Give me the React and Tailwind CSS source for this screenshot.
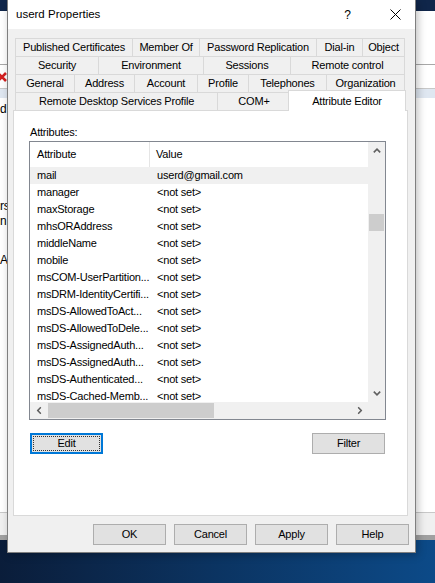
const TAB_ROWS = [
  [['Published Certificates', 117], ['Member Of', 67], ['Password Replication', 117], ['Dial-in', 46], ['Object', 43]],
  [['Security', 83], ['Environment', 105], ['Sessions', 87], ['Remote control', 115]],
  [['General', 59], ['Address', 60], ['Account', 63], ['Profile', 51], ['Telephones', 78], ['Organization', 79]],
]

const ATTRIBUTES = [
  ['mail', 'userd@gmail.com'],
  ['manager', '<not set>'],
  ['maxStorage', '<not set>'],
  ['mhsORAddress', '<not set>'],
  ['middleName', '<not set>'],
  ['mobile', '<not set>'],
  ['msCOM-UserPartition...', '<not set>'],
  ['msDRM-IdentityCertifi...', '<not set>'],
  ['msDS-AllowedToAct...', '<not set>'],
  ['msDS-AllowedToDele...', '<not set>'],
  ['msDS-AssignedAuth...', '<not set>'],
  ['msDS-AssignedAuth...', '<not set>'],
  ['msDS-Authenticated...', '<not set>'],
  ['msDS-Cached-Memb...', '<not set>'],
]

// small scrollbar arrow, rotated per direction
function Arrow({ dir }) {
  const rot = { up: 0, down: 180, left: 270, right: 90 }[dir]
  return (
    <svg width="8" height="5" viewBox="0 0 8 5" style={{ transform: `rotate(${rot}deg)` }}>
      <polyline points="0.8,4.4 4,1.2 7.2,4.4" fill="none" stroke="#606060" strokeWidth="1.6" />
    </svg>
  )
}

function Tab({ label, width, last }) {
  return (
    <div
      className={`h-[18px] flex items-center justify-center border-t border-l border-[#d9d9d9] ${last ? 'border-r' : ''}`}
      style={{ width }}
    >
      {label}
    </div>
  )
}

function Button({ children, className = '' }) {
  return (
    <div className={`w-[73px] h-[21px] flex items-center justify-center bg-[#e1e1e1] border border-[#adadad] ${className}`}>
      {children}
    </div>
  )
}

function AttributeList() {
  return (
    <div className="w-[357px] h-[279px] border border-[#828790] bg-white flex flex-col">
      <div className="flex h-[260px]">
        {/* rows */}
        <div className="flex-1 overflow-hidden">
          <div className="flex h-[25px] items-center">
            <div className="w-[120px] h-full pl-[7px] flex items-center border-r border-[#e5e5e5]">Attribute</div>
            <div className="pl-[6px]">Value</div>
          </div>
          {ATTRIBUTES.map(([name, value], i) => (
            <div key={i} className={`flex h-[17px] items-center ${i === 0 ? 'bg-[#f0f0f0]' : ''}`}>
              <div className="w-[121px] pl-[7px] whitespace-nowrap">{name}</div>
              <div className="pl-[6px] whitespace-nowrap">{value}</div>
            </div>
          ))}
        </div>
        {/* vertical scrollbar */}
        <div className="w-[17px] bg-[#f0f0f0] flex flex-col">
          <div className="h-[17px] flex items-center justify-center"><Arrow dir="up" /></div>
          <div className="flex-1 pt-[55px]">
            <div className="w-[15px] h-[17px] ml-[1px] bg-[#cdcdcd]" />
          </div>
          <div className="h-[17px] flex items-center justify-center"><Arrow dir="down" /></div>
        </div>
      </div>
      {/* horizontal scrollbar */}
      <div className="flex h-[17px]">
        <div className="flex-1 bg-[#f0f0f0] flex items-center">
          <div className="w-[17px] h-full flex items-center justify-center"><Arrow dir="left" /></div>
          <div className="w-[166px] h-[15px] ml-[1px] bg-[#cdcdcd]" />
          <div className="flex-1" />
          <div className="w-[17px] h-full flex items-center justify-center"><Arrow dir="right" /></div>
        </div>
        <div className="w-[17px] bg-[#f0f0f0]" />
      </div>
    </div>
  )
}

export default function App() {
  return (
    <div className="relative w-[435px] h-[583px] overflow-hidden font-['Liberation_Sans',Arial,sans-serif] text-[11px] tracking-[-0.2px] text-black">

      {/* window behind the dialog */}
      <div className="flex flex-col h-full">
        <div className="h-[11px] bg-[#10264a]" />
        <div className="h-[53px] bg-white" />
        <div className="h-px bg-[#a8a8a8]" />
        <div className="h-[23px] bg-white flex items-center">
          <svg width="10" height="10" viewBox="0 0 10 10" className="-ml-[3px]">
            <path d="M1 1 L9 9 M9 1 L1 9" stroke="#d42020" strokeWidth="2.6" />
          </svg>
        </div>
        <div className="h-px bg-[#c8c8c8]" />
        <div className="h-[9px] bg-[#dfe7f1]" />
        <div className="h-[414px] bg-white flex flex-col text-[12px] leading-none">
          <div className="pt-[5px]">d</div>
          <div className="pt-[85px]">rs</div>
          <div className="pt-[3px]">n</div>
          <div className="pt-[27px]">Ac</div>
        </div>
        <div className="h-px bg-[#c8c8c8]" />
        <div className="h-[22px] bg-[#f0f0f0]" />
        <div className="h-[5px] bg-[#a0a0a0]" />
        <div className="flex-1 bg-gradient-to-r from-[#0a1d3a] via-[#0b3462] to-[#0c4a88]" />
      </div>

      {/* Properties dialog */}
      <div className="absolute left-[7px] top-0 w-[409px] h-[553px] bg-[#f0f0f0] border-x border-b border-[#7f7f7f] flex flex-col shadow-[2px_2px_8px_rgba(0,0,0,0.25)]">
        <div className="h-[29px] bg-white flex items-center pl-[8px] pr-[14px] text-[11.5px] tracking-normal">
          <span className="flex-1">userd Properties</span>
          <span className="mr-[39px] text-[12px]">?</span>
          <svg width="11" height="11" viewBox="0 0 11 11">
            <path d="M0.5 0.5 L10.5 10.5 M10.5 0.5 L0.5 10.5" stroke="#000" strokeWidth="1" />
          </svg>
        </div>

        {/* tab strip */}
        <div className="pt-[9px] pl-[7px]">
          {TAB_ROWS.map((row, r) => (
            <div key={r} className="flex">
              {row.map(([label, w], i) => (
                <Tab key={label} label={label} width={w} last={i === row.length - 1} />
              ))}
            </div>
          ))}
          <div className="flex items-end h-[18px]">
            <Tab label="Remote Desktop Services Profile" width={202} />
            <Tab label="COM+" width={73} />
            <div className="w-[118px] h-[21px] shrink-0 -mb-[1px] -ml-[2px] relative z-10 bg-white border-x border-t border-[#d9d9d9] flex justify-center pt-[2px]">
              Attribute Editor
            </div>
          </div>
        </div>

        {/* Attribute Editor page */}
        <div className="ml-[5px] w-[395px] h-[406px] bg-white border border-[#d9d9d9] pl-[15px] pt-[13px]">
          <div className="h-[17px] pl-[1px]">Attributes:</div>
          <AttributeList />
          <div className="flex justify-between w-[356px] pl-[1px] mt-[13px]">
            <div className="w-[73px] h-[21px] bg-[#e1e1e1] border-2 border-[#0078d7] p-[1px]">
              <div className="w-full h-full border border-dotted border-[#333] flex items-center justify-center">Edit</div>
            </div>
            <Button>Filter</Button>
          </div>
        </div>

        <div className="flex justify-end gap-[8px] pr-[6px] mt-[8px]">
          <Button>OK</Button>
          <Button>Cancel</Button>
          <Button>Apply</Button>
          <Button>Help</Button>
        </div>
      </div>
    </div>
  )
}
